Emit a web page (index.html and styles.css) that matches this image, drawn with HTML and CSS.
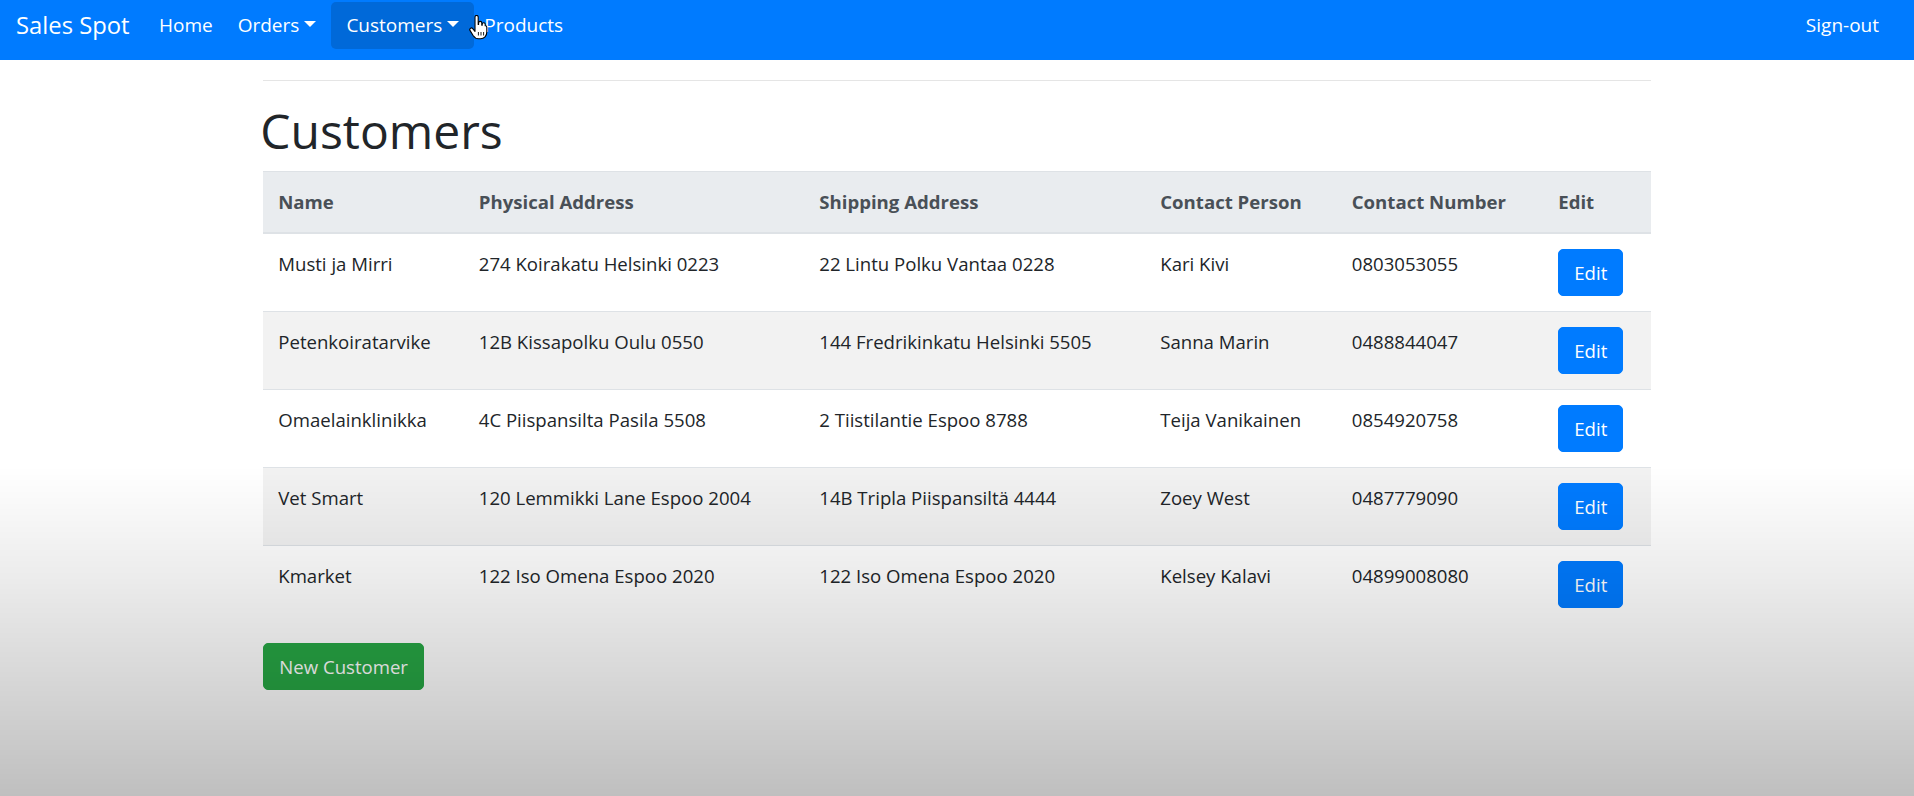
FILE: index.html
```html
<!DOCTYPE html>
<html lang="en">
<head>
<meta charset="utf-8">
<title>Sales Spot - Customers</title>
<link rel="stylesheet" href="styles.css">
</head>
<body>
<nav class="navbar">
  <a class="brand" href="#">Sales Spot</a>
  <ul class="nav">
    <li class="nav-item gap"><a class="nav-link" href="#">Home</a></li>
    <li class="nav-item gap"><a class="nav-link caret" href="#">Orders</a></li>
    <li class="nav-item"><a class="nav-link caret active-btn" href="#">Customers</a></li>
    <li class="nav-item"><a class="nav-link" href="#">Products</a></li>
  </ul>
  <a class="nav-link signout" href="#">Sign-out</a>
</nav>

<main class="container">
  <hr class="divider">
  <h1 class="title">Customers</h1>
  <table class="table">
    <colgroup>
      <col class="c-name"><col class="c-phys"><col class="c-ship"><col class="c-person"><col class="c-num"><col class="c-edit">
    </colgroup>
    <thead>
      <tr>
        <th>Name</th>
        <th>Physical Address</th>
        <th>Shipping Address</th>
        <th>Contact Person</th>
        <th>Contact Number</th>
        <th>Edit</th>
      </tr>
    </thead>
    <tbody>
      <tr>
        <td>Musti ja Mirri</td>
        <td>274 Koirakatu Helsinki 0223</td>
        <td>22 Lintu Polku Vantaa 0228</td>
        <td>Kari Kivi</td>
        <td>0803053055</td>
        <td><a class="btn btn-primary" href="#">Edit</a></td>
      </tr>
      <tr>
        <td>Petenkoiratarvike</td>
        <td>12B Kissapolku Oulu 0550</td>
        <td>144 Fredrikinkatu Helsinki 5505</td>
        <td>Sanna Marin</td>
        <td>0488844047</td>
        <td><a class="btn btn-primary" href="#">Edit</a></td>
      </tr>
      <tr>
        <td>Omaelainklinikka</td>
        <td>4C Piispansilta Pasila 5508</td>
        <td>2 Tiistilantie Espoo 8788</td>
        <td>Teija Vanikainen</td>
        <td>0854920758</td>
        <td><a class="btn btn-primary" href="#">Edit</a></td>
      </tr>
      <tr>
        <td>Vet Smart</td>
        <td>120 Lemmikki Lane Espoo 2004</td>
        <td>14B Tripla Piispansiltä 4444</td>
        <td>Zoey West</td>
        <td>0487779090</td>
        <td><a class="btn btn-primary" href="#">Edit</a></td>
      </tr>
      <tr>
        <td>Kmarket</td>
        <td>122 Iso Omena Espoo 2020</td>
        <td>122 Iso Omena Espoo 2020</td>
        <td>Kelsey Kalavi</td>
        <td>04899008080</td>
        <td><a class="btn btn-primary" href="#">Edit</a></td>
      </tr>
    </tbody>
  </table>
  <a class="btn btn-success" href="#">New Customer</a>
</main>

<svg class="cursor" width="19" height="25" viewBox="0 0 19 25" aria-hidden="true">
  <path d="M6 2a1.6 1.6 0 0 1 3.2 0V9.5h.4V8a1.6 1.6 0 0 1 3.2 0v2.2h.4V9.2a1.5 1.5 0 0 1 3 0v1.6h.2a1.4 1.4 0 0 1 1.4 1.4V17c0 3.8-2.5 6.8-6.3 6.8H9.6c-2.6 0-4.2-1.3-5.5-3.3L1.1 15.6a1.6 1.6 0 0 1 2.6-1.9L6 16.4Z" fill="#fff" stroke="#000" stroke-width="1.1" stroke-linejoin="round"/>
  <path d="M9.4 17v3.5M12 17v3.5M14.6 17v3.5" stroke="#000" stroke-width="0.9"/>
</svg>
<div class="shade"></div>
</body>
</html>
```

FILE: styles.css
```css
html, body {
  margin: 0;
  padding: 0;
}
body {
  font-family: "Open Sans", "Noto Sans", sans-serif;
  font-size: 18.6px;
  line-height: 30px;
  color: #212529;
  background: #fff;
  min-height: 796px;
}
a { text-decoration: none; }

.navbar {
  display: flex;
  align-items: center;
  height: 60px;
  box-sizing: border-box;
  padding: 0 25px 10px 16px;
  background: #007bff;
}
.brand {
  width: 113px;
  margin-right: 20px;
  font-size: 23.8px;
  line-height: 37px;
  color: #fff;
  white-space: nowrap;
}
.nav {
  display: flex;
  align-items: center;
  list-style: none;
  margin: 0;
  padding: 0;
}
.nav-item.gap { margin-right: 5px; }
.nav-link {
  display: block;
  padding: 8.5px 10px;
  font-size: 19px;
  color: #fff;
  white-space: nowrap;
}
.caret::after {
  content: "";
  display: inline-block;
  margin-left: 5px;
  vertical-align: 5px;
  border-top: 6px solid #fff;
  border-left: 6px solid transparent;
  border-right: 6px solid transparent;
}
.active-btn {
  padding: 8.5px 15px;
  background: #0069d9;
  border-radius: 5px;
}
.signout { margin-left: auto; }

.container {
  width: 1387.5px;
  margin: 0 auto;
}
.divider {
  margin: 20px 0;
  border: 0;
  border-top: 1px solid rgba(0, 0, 0, 0.1);
}
.title {
  margin: 0 0 10px -3px;
  font-size: 48px;
  font-weight: 500;
  line-height: 60px;
}

.table {
  width: 100%;
  border-collapse: collapse;
  table-layout: fixed;
  margin-bottom: 20px;
}
.c-name { width: 200.5px; }
.c-phys { width: 340.5px; }
.c-ship { width: 341px; }
.c-person { width: 191.5px; }
.c-num { width: 206.5px; }
.table th,
.table td {
  padding: 15px;
  text-align: left;
  vertical-align: top;
  border-top: 1px solid #dee2e6;
  white-space: nowrap;
}
.table thead th {
  background: #e9ecef;
  color: #495057;
  font-weight: 700;
  vertical-align: bottom;
  border-bottom: 2px solid #dee2e6;
}
.table tbody tr:nth-child(even) { background: rgba(0, 0, 0, 0.05); }

.btn {
  display: inline-block;
  padding: 7.5px 15px;
  line-height: 30px;
  border: 1px solid transparent;
  border-radius: 5px;
  color: #fff;
}
.btn-primary { background: #007bff; border-color: #007bff; }
.btn-success { background: #28a745; border-color: #28a745; }

.cursor {
  position: absolute;
  left: 469px;
  top: 15px;
}
.shade {
  position: fixed;
  left: 0;
  right: 0;
  bottom: 0;
  height: 330px;
  background: linear-gradient(to bottom, rgba(0, 0, 0, 0), rgba(0, 0, 0, 0.08) 35%, rgba(0, 0, 0, 0.25));
  pointer-events: none;
}
```
